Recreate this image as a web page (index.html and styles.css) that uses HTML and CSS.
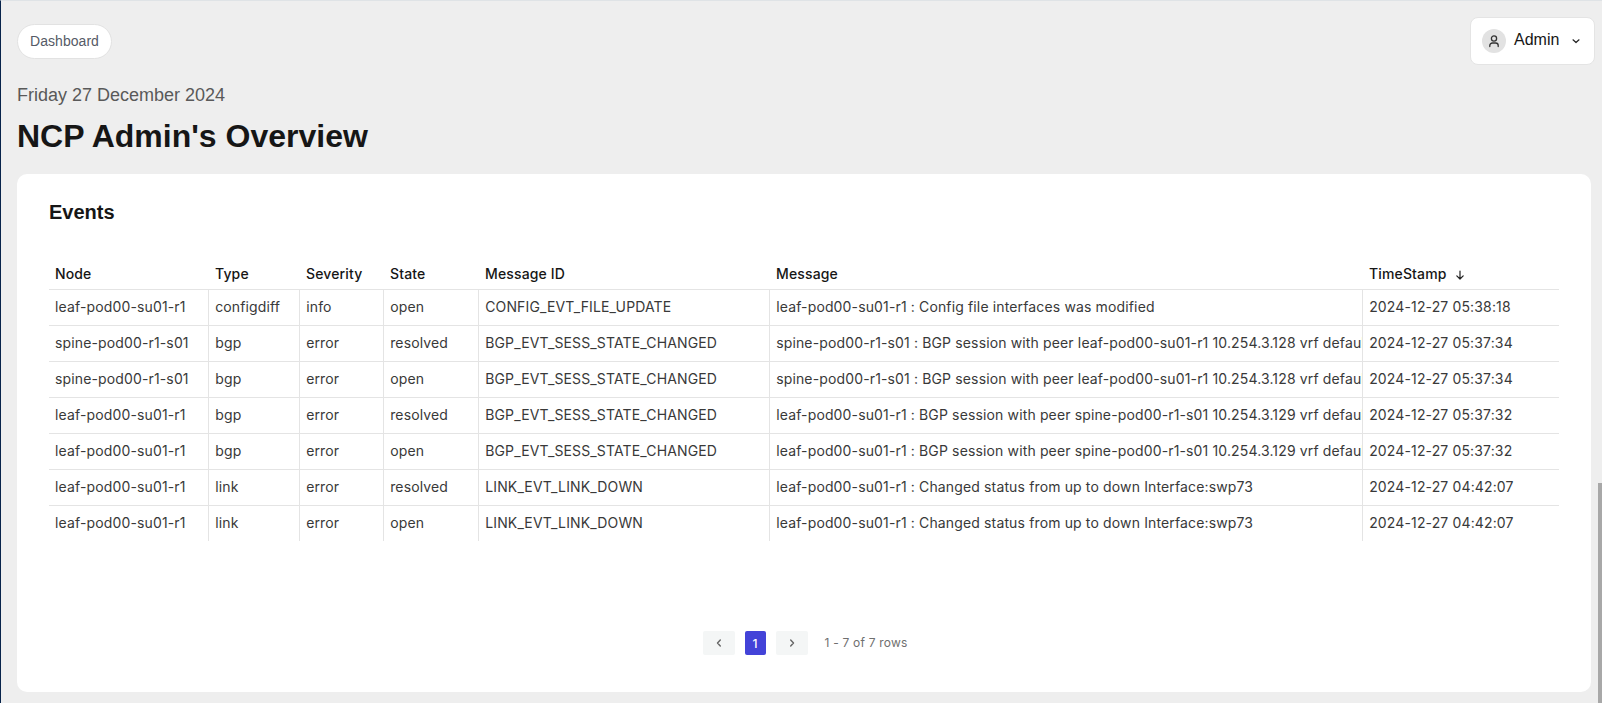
FILE: index.html
```html
<!DOCTYPE html>
<html lang="en">
<head>
    <meta charset="UTF-8">
    <meta name="viewport" content="width=device-width, initial-scale=1.0">
    <title>NCP Admin's Overview</title>
    <link rel="stylesheet" href="styles.css">
</head>
<body>
    <div class="page">
        <header class="topbar">
            <a class="crumb" href="#">Dashboard</a>
            <button class="user-menu" type="button">
                <span class="avatar">
                    <svg width="16" height="16" viewBox="0 0 16 16" fill="none" stroke="#333" stroke-width="1.3" stroke-linecap="round">
                        <circle cx="8" cy="5.5" r="2.6"/>
                        <path d="M3.8 13.6v-1a2.6 2.6 0 0 1 2.6-2.6h3.2a2.6 2.6 0 0 1 2.6 2.6v1"/>
                    </svg>
                </span>
                <span class="user-name">Admin</span>
                <svg class="chevron" width="10" height="10" viewBox="0 0 10 10" fill="none" stroke="#222" stroke-width="1.2" stroke-linecap="round" stroke-linejoin="round">
                    <path d="M2 3.8 5 6.5l3-2.7"/>
                </svg>
            </button>
        </header>

        <p class="date">Friday 27 December 2024</p>
        <h1>NCP Admin's Overview</h1>

        <section class="card">
            <h2>Events</h2>
            <table class="events">
                <colgroup>
                    <col class="col-node">
                    <col class="col-type">
                    <col class="col-severity">
                    <col class="col-state">
                    <col class="col-id">
                    <col class="col-message">
                    <col class="col-time">
                </colgroup>
                <thead>
                    <tr>
                        <th>Node</th>
                        <th>Type</th>
                        <th>Severity</th>
                        <th>State</th>
                        <th>Message ID</th>
                        <th>Message</th>
                        <th>TimeStamp
                            <svg class="sort" width="12" height="12" viewBox="0 0 12 12" fill="none" stroke="#222" stroke-width="1.2" stroke-linecap="round" stroke-linejoin="round">
                                <path d="M6 2v8M2.8 6.8 6 10l3.2-3.2"/>
                            </svg>
                        </th>
                    </tr>
                </thead>
                <tbody>
                    <tr>
                        <td>leaf-pod00-su01-r1</td><td>configdiff</td><td>info</td><td>open</td>
                        <td>CONFIG_EVT_FILE_UPDATE</td>
                        <td>leaf-pod00-su01-r1 : Config file interfaces was modified</td>
                        <td>2024-12-27 05:38:18</td>
                    </tr>
                    <tr>
                        <td>spine-pod00-r1-s01</td><td>bgp</td><td>error</td><td>resolved</td>
                        <td>BGP_EVT_SESS_STATE_CHANGED</td>
                        <td>spine-pod00-r1-s01 : BGP session with peer leaf-pod00-su01-r1 10.254.3.128 vrf default</td>
                        <td>2024-12-27 05:37:34</td>
                    </tr>
                    <tr>
                        <td>spine-pod00-r1-s01</td><td>bgp</td><td>error</td><td>open</td>
                        <td>BGP_EVT_SESS_STATE_CHANGED</td>
                        <td>spine-pod00-r1-s01 : BGP session with peer leaf-pod00-su01-r1 10.254.3.128 vrf default</td>
                        <td>2024-12-27 05:37:34</td>
                    </tr>
                    <tr>
                        <td>leaf-pod00-su01-r1</td><td>bgp</td><td>error</td><td>resolved</td>
                        <td>BGP_EVT_SESS_STATE_CHANGED</td>
                        <td>leaf-pod00-su01-r1 : BGP session with peer spine-pod00-r1-s01 10.254.3.129 vrf default</td>
                        <td>2024-12-27 05:37:32</td>
                    </tr>
                    <tr>
                        <td>leaf-pod00-su01-r1</td><td>bgp</td><td>error</td><td>open</td>
                        <td>BGP_EVT_SESS_STATE_CHANGED</td>
                        <td>leaf-pod00-su01-r1 : BGP session with peer spine-pod00-r1-s01 10.254.3.129 vrf default</td>
                        <td>2024-12-27 05:37:32</td>
                    </tr>
                    <tr>
                        <td>leaf-pod00-su01-r1</td><td>link</td><td>error</td><td>resolved</td>
                        <td>LINK_EVT_LINK_DOWN</td>
                        <td>leaf-pod00-su01-r1 : Changed status from up to down Interface:swp73</td>
                        <td>2024-12-27 04:42:07</td>
                    </tr>
                    <tr>
                        <td>leaf-pod00-su01-r1</td><td>link</td><td>error</td><td>open</td>
                        <td>LINK_EVT_LINK_DOWN</td>
                        <td>leaf-pod00-su01-r1 : Changed status from up to down Interface:swp73</td>
                        <td>2024-12-27 04:42:07</td>
                    </tr>
                </tbody>
            </table>

            <nav class="pager">
                <button class="page-step" type="button">
                    <svg width="10" height="10" viewBox="0 0 10 10" fill="none" stroke="#666" stroke-width="1.4" stroke-linecap="round" stroke-linejoin="round"><path d="M6.3 2 3.5 5l2.8 3"/></svg>
                </button>
                <button class="page-num" type="button">1</button>
                <button class="page-step" type="button">
                    <svg width="10" height="10" viewBox="0 0 10 10" fill="none" stroke="#666" stroke-width="1.4" stroke-linecap="round" stroke-linejoin="round"><path d="M3.7 2 6.5 5 3.7 8"/></svg>
                </button>
                <span class="page-info">1 - 7 of 7 rows</span>
            </nav>
        </section>
    </div>
    <!-- page scrollbar thumb -->
    <div class="scroll-thumb"></div>
</body>
</html>
```

FILE: styles.css
```css
html, body {
    height: 100%;
}

body {
    margin: 0;
    overflow: hidden;
    background-color: #eeeeee;
    border-top: 1px solid #dfe3e6;
    border-left: 1px solid #07234a;
    box-sizing: border-box;
    font-family: "Liberation Sans", Arial, sans-serif;
    color: #161616;
}

.page {
    padding: 16px 7px 0 16px;
}

.topbar {
    display: flex;
    justify-content: space-between;
    align-items: flex-start;
    height: 68px;
}

.crumb {
    display: flex;
    align-items: center;
    margin-top: 7px;
    height: 35px;
    width: 95px;
    padding-bottom: 2px;
    box-sizing: border-box;
    justify-content: center;
    background-color: #fff;
    border: 1px solid #e2e2e2;
    border-radius: 18px;
    font-size: 14px;
    letter-spacing: 0.05px;
    color: #555a66;
    text-decoration: none;
}

.user-menu {
    display: flex;
    align-items: center;
    width: 125px;
    height: 48px;
    padding: 0 0 0 11px;
    box-sizing: border-box;
    background-color: #fff;
    border: 1px solid #e4e4e4;
    border-radius: 8px;
    font-family: inherit;
    font-size: 16px;
    color: #161616;
}

.avatar {
    display: flex;
    align-items: center;
    justify-content: center;
    width: 24px;
    height: 24px;
    border-radius: 50%;
    background-color: #e2e2e2;
}

.user-name {
    margin: -2px 0 0 8px;
}

.chevron {
    margin-left: 12px;
}

.date {
    margin: 0;
    font-size: 18px;
    line-height: 20px;
    color: #595959;
}

h1 {
    margin: 11px 0 0;
    font-size: 32px;
    line-height: 40px;
    font-weight: 700;
    color: #161616;
}

.card {
    height: 518px;
    margin: 18px 4px 0 0;
    padding: 26px 32px 0;
    box-sizing: border-box;
    background-color: #fff;
    border-radius: 10px;
}

h2 {
    margin: 0;
    font-size: 20px;
    line-height: 24px;
    font-weight: 700;
    color: #161616;
}

.events {
    width: 1510px;
    margin-top: 29px;
    table-layout: fixed;
    border-collapse: collapse;
    font-family: Inter, "Liberation Sans", sans-serif;
    font-size: 14px;
    letter-spacing: 0.14px;
}

.col-node { width: 159px; }
.col-type { width: 91px; }
.col-severity { width: 84px; }
.col-state { width: 95px; }
.col-id { width: 291px; }
.col-message { width: 593px; }
.col-time { width: 197px; }

.events th {
    height: 36px;
    padding: 6px 6px 0 7px;
    box-sizing: border-box;
    text-align: left;
    font-weight: 500;
    font-size: 14px;
    color: #161616;
    border-bottom: 1px solid #e4e4e4;
    white-space: nowrap;
}

.events td {
    height: 36px;
    padding: 0 0 1px 6.7px;
    box-sizing: border-box;
    color: #393939;
    overflow: hidden;
    white-space: nowrap;
    border-bottom: 1px solid #e4e4e4;
    border-right: 1px solid #e4e4e4;
}

.events th:first-child,
.events td:first-child {
    padding-left: 6px;
}

.events tr:last-child td {
    border-bottom: none;
}

.events td:last-child {
    border-right: none;
}

.sort {
    margin-left: 4px;
    vertical-align: -2px;
}

.pager {
    display: flex;
    align-items: center;
    justify-content: center;
    gap: 10px;
    margin-top: 90px;
    padding-left: 2px;
}

.page-step {
    display: flex;
    align-items: center;
    justify-content: center;
    width: 32px;
    height: 24px;
    padding: 0;
    border: none;
    border-radius: 2px;
    background-color: #f4f6f6;
}

.page-num {
    width: 21px;
    height: 24px;
    padding: 0;
    border: none;
    border-radius: 2px;
    background-color: #4343d8;
    color: #fff;
    font-family: Inter, "Liberation Sans", sans-serif;
    font-size: 12px;
    font-weight: 500;
}

.page-info {
    margin-left: 7px;
    padding-bottom: 2px;
    font-family: Inter, "Liberation Sans", sans-serif;
    font-size: 12px;
    letter-spacing: 0.2px;
    color: #6f6f6f;
}

.scroll-thumb {
    position: absolute;
    top: 483px;
    right: 0;
    bottom: 0;
    width: 4px;
    background-color: #a8a8a8;
}
```
